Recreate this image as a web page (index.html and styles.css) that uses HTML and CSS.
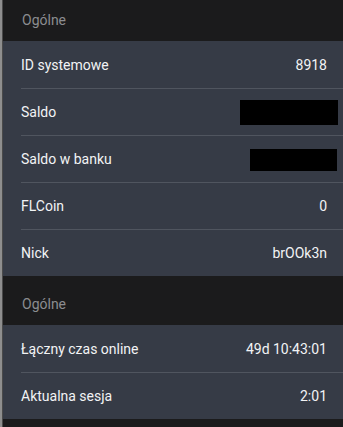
FILE: index.html
```html
<!DOCTYPE html>
<html lang="pl">
<head>
<meta charset="utf-8">
<link rel="stylesheet" href="styles.css">
</head>
<body>
<div class="frame">
  <div class="section-head first">Ogólne</div>
  <div class="panel">
    <div class="row"><span class="label">ID systemowe</span><span class="value">8918</span></div>
    <div class="row"><span class="label">Saldo</span><span class="redact redact-a"></span></div>
    <div class="row"><span class="label">Saldo w banku</span><span class="redact redact-b"></span></div>
    <div class="row"><span class="label">FLCoin</span><span class="value">0</span></div>
    <div class="row"><span class="label">Nick</span><span class="value">brOOk3n</span></div>
  </div>
  <div class="section-head">Ogólne</div>
  <div class="panel">
    <div class="row"><span class="label">Łączny czas online</span><span class="value">49d 10:43:01</span></div>
    <div class="row"><span class="label">Aktualna sesja</span><span class="value">2:01</span></div>
  </div>
</div>
</body>
</html>
```

FILE: styles.css
```css
html, body {
  margin: 0;
  padding: 0;
  background: #1b1b1c;
  height: 100%;
  overflow: hidden;
}
.frame {
  height: 427px;
  border-left: 2px solid #8e8e8e;
  box-shadow: inset 1px 0 0 #4a4a4a;
  background: #1b1b1c;
  font-family: Roboto, "Noto Sans", sans-serif;
  font-size: 14px;
}
.section-head {
  box-sizing: border-box;
  height: 49px;
  padding: 19px 0 0 19px;
  line-height: 18px;
  color: #8b8d90;
  margin-left: 1px;
}
.section-head.first {
  height: 41px;
  padding-top: 11px;
}
.panel {
  background: #363b46;
  margin-left: 1px;
}
.row {
  box-sizing: border-box;
  height: 47px;
  margin-left: 18px;
  padding-right: 16px;
  display: flex;
  align-items: center;
  justify-content: space-between;
  color: #f2f3f5;
  border-top: 1px solid #50555f;
}
.row:first-child {
  border-top: none;
}
.label, .value {
  line-height: 18px;
}
.redact {
  display: block;
  background: #000;
}
.redact-a {
  width: 98px;
  height: 25px;
  margin-right: -11px;
  margin-top: 1px;
}
.redact-b {
  width: 87px;
  height: 22px;
  margin-right: -10px;
  margin-top: 1px;
}
```
